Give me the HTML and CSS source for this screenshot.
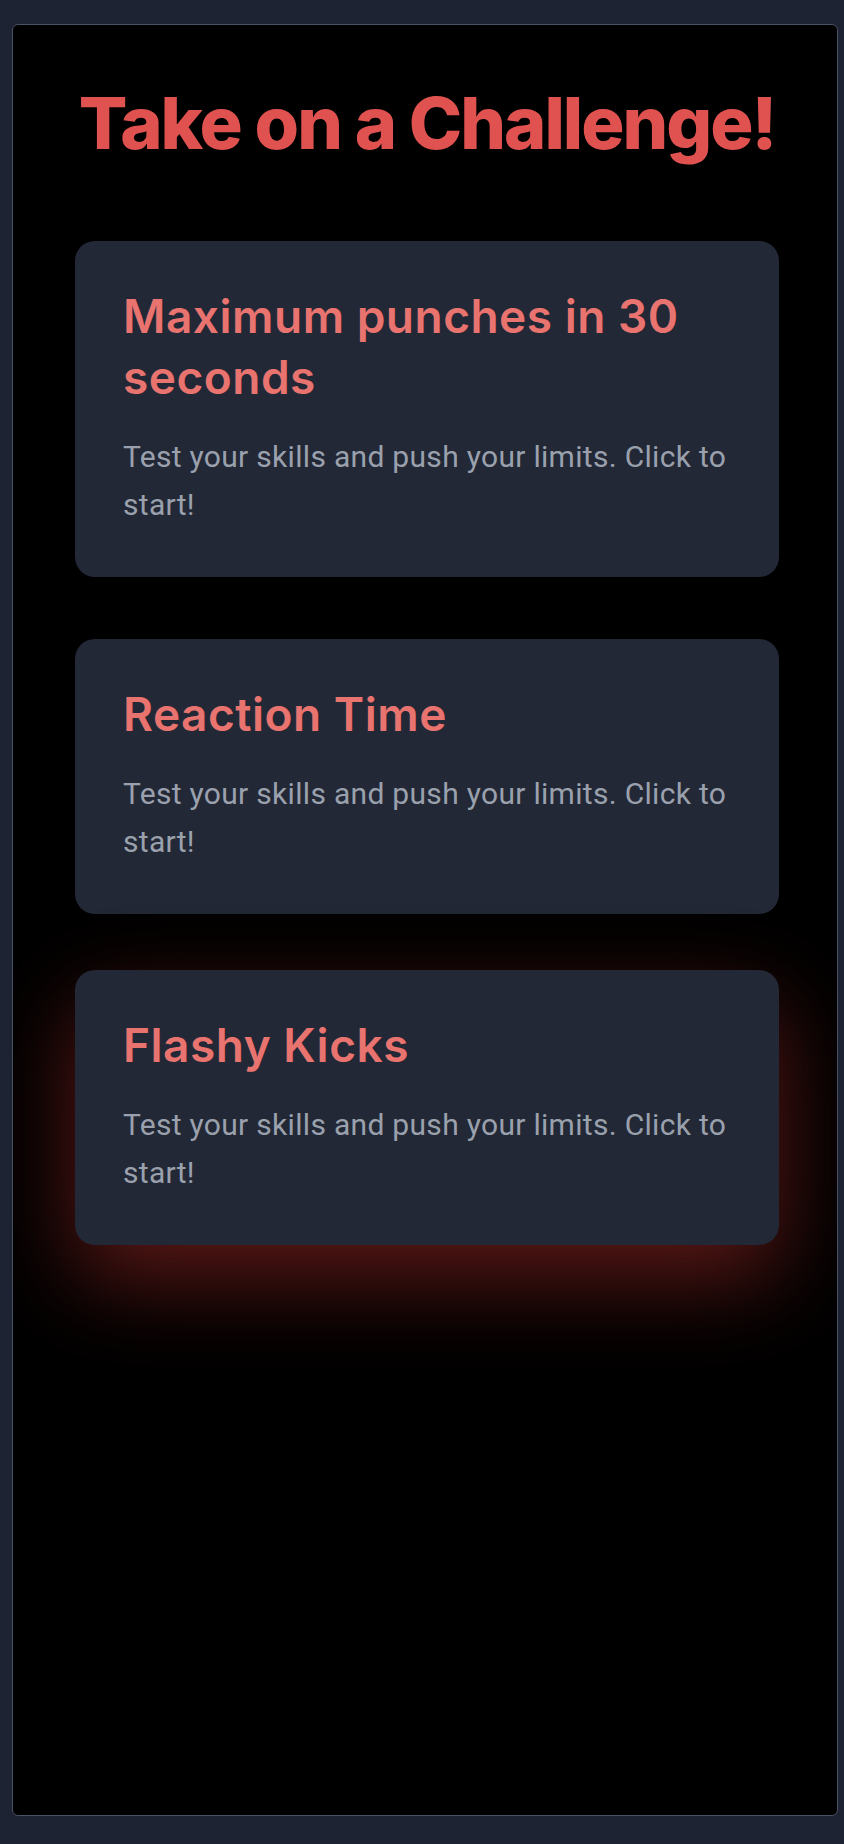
FILE: index.html
```html
<!DOCTYPE html>
<html lang="en">
<head>
<meta charset="utf-8">
<title>Take on a Challenge!</title>
<link rel="stylesheet" href="styles.css">
</head>
<body>
<main class="frame">
  <h1 class="page-title">Take on a Challenge!</h1>
  <section class="challenges">
    <article class="card">
      <h2 class="card-title">Maximum punches in 30 seconds</h2>
      <p class="card-text">Test your skills and push your limits. Click to start!</p>
    </article>
    <article class="card">
      <h2 class="card-title">Reaction Time</h2>
      <p class="card-text">Test your skills and push your limits. Click to start!</p>
    </article>
    <article class="card card-hover">
      <h2 class="card-title">Flashy Kicks</h2>
      <p class="card-text">Test your skills and push your limits. Click to start!</p>
    </article>
  </section>
</main>
</body>
</html>
```

FILE: styles.css
```css
* { box-sizing: border-box; }

html, body {
  margin: 0;
  background: #1e2333;
}

body {
  padding: 24px 6px 28px 12px;
}

.frame {
  height: 1792px;
  background: #000;
  border: 1px solid #4a5163;
  border-radius: 6px;
  padding: 0 58px 0 62px;
  overflow: hidden;
}

.page-title {
  margin: 55px 0 0;
  font-family: Inter, "Noto Sans", sans-serif;
  font-weight: 800;
  font-size: 72px;
  line-height: 86px;
  letter-spacing: -2px;
  color: #e0524f;
  text-align: center;
}

.challenges {
  display: flex;
  flex-direction: column;
  gap: 62px;
  margin-top: 75px;
}

.card {
  background: #222836;
  border-radius: 20px;
  padding: 45px 48px 48px;
}

.card-hover {
  transform: translateY(-6px);
  box-shadow: 0 34px 90px rgba(220, 60, 55, 0.42);
}

.card-title {
  margin: 0 0 25px;
  font-family: Inter, "Noto Sans", sans-serif;
  font-weight: 600;
  font-size: 46px;
  line-height: 61px;
  letter-spacing: 0.5px;
  color: #e8736f;
}

.card-text {
  margin: 0;
  font-family: Roboto, "Noto Sans", sans-serif;
  font-weight: 400;
  font-size: 30px;
  line-height: 48px;
  letter-spacing: 0.3px;
  color: #9aa1ad;
}
```
